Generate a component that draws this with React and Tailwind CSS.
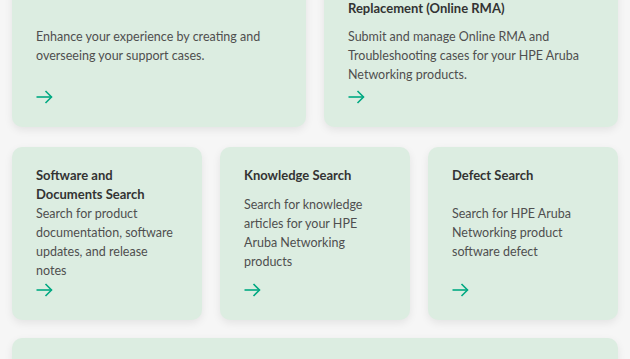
import React from "react";

const topCards = [
  {
    title: "Support Case Management",
    body: "Enhance your experience by creating and overseeing your support cases.",
  },
  {
    title: "Hardware Troubleshooting and Replacement (Online RMA)",
    body: "Submit and manage Online RMA and Troubleshooting cases for your HPE Aruba Networking products.",
  },
];

const searchCards = [
  {
    title: "Software and Documents Search",
    body: "Search for product documentation, software updates, and release notes",
  },
  {
    title: "Knowledge Search",
    body: "Search for knowledge articles for your HPE Aruba Networking products",
  },
  {
    title: "Defect Search",
    body: "Search for HPE Aruba Networking product software defect",
  },
];

function Arrow() {
  return (
    <div className="h-[19px] flex items-center">
      <svg width="17" height="14" viewBox="0 0 17 14" fill="none" stroke="#01a982" strokeWidth="1.6">
        <path d="M0.5 7h15" />
        <path d="M9.5 1l6 6-6 6" />
      </svg>
    </div>
  );
}

function Card({ title, body, top }) {
  return (
    <div className="bg-[#dcede1] rounded-[10px] shadow-[0_3px_8px_rgba(0,0,0,0.08)] pt-[19px] pb-[21px] px-6 flex flex-col justify-between">
      <h3 className="text-[13px] leading-[19px] font-bold text-[#333333] pr-4">{title}</h3>
      <p className={`text-[12.5px] leading-[19px] text-[#4f4f4f] ${top ? "pt-[9px] pb-[3px]" : ""}`}>{body}</p>
      <Arrow />
    </div>
  );
}

export default function App() {
  return (
    <div
      className="bg-[#f6f6f6] min-h-screen h-[359px] overflow-hidden px-3"
      style={{ fontFamily: "Lato, 'Open Sans', sans-serif" }}
    >
      <div className="-mt-[39px] grid grid-cols-2 gap-[18px]">
        {topCards.map((c, i) => (
          <Card key={i} {...c} top />
        ))}
      </div>
      <div className="mt-5 grid grid-cols-3 gap-[18px]">
        {searchCards.map((c, i) => (
          <Card key={i} {...c} />
        ))}
      </div>
      <div className="mt-[18px] bg-[#dcede1] rounded-[10px] shadow-[0_3px_8px_rgba(0,0,0,0.08)] pt-[30px] px-6 h-[120px]">
        <h3 className="text-[13px] leading-[19px] font-bold text-[#333333]">Community</h3>
      </div>
    </div>
  );
}
